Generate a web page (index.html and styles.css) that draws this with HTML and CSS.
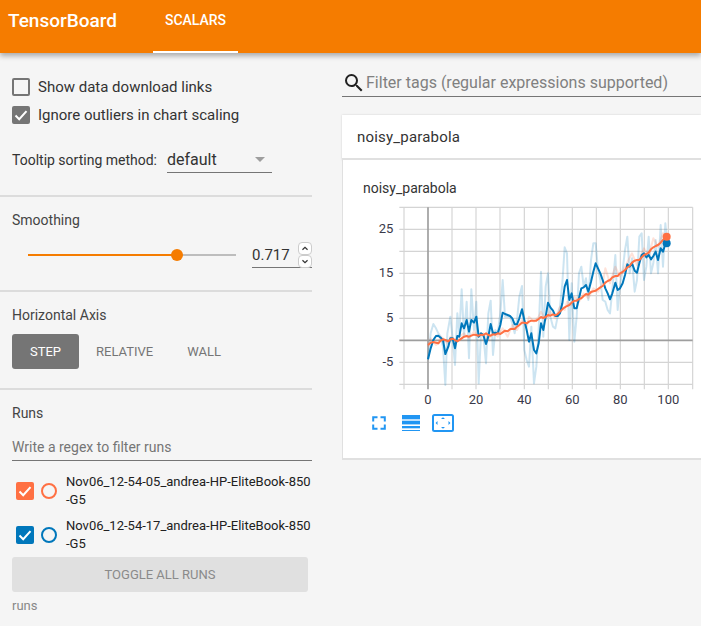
FILE: index.html
```html
<!DOCTYPE html>
<html lang="en">
<head>
    <meta charset="UTF-8">
    <meta name="viewport" content="width=device-width, initial-scale=1.0">
    <title>TensorBoard</title>
    <link rel="stylesheet" href="styles.css">
</head>
<body>
    <header class="topbar">
        <div class="brand">TensorBoard</div>
        <div class="tab">SCALARS</div>
    </header>
    <div class="content">
        <aside class="sidebar">
            <section class="options">
                <label class="check-row">
                    <span class="checkbox"></span>
                    <span>Show data download links</span>
                </label>
                <label class="check-row">
                    <span class="checkbox checked">
                        <svg viewBox="0 0 18 18"><path class="tick" d="M3.5 9.5l3.7 3.7 7.3-8"/></svg>
                    </span>
                    <span>Ignore outliers in chart scaling</span>
                </label>
                <div class="sort-row">
                    <span class="sort-label">Tooltip sorting method:</span>
                    <div class="dropdown">
                        <span>default</span>
                        <span class="caret"></span>
                    </div>
                </div>
            </section>
            <section class="smoothing">
                <div class="section-title">Smoothing</div>
                <div class="slider-row">
                    <div class="slider">
                        <div class="slider-fill"></div>
                        <div class="slider-thumb"></div>
                    </div>
                    <div class="number-input">
                        <span>0.717</span>
                        <div class="spinner">
                            <span class="spin-btn">
                                <svg viewBox="0 0 14 13"><path d="M4 8l3-3 3 3"/></svg>
                            </span>
                            <span class="spin-btn">
                                <svg viewBox="0 0 14 13"><path d="M4 5l3 3 3-3"/></svg>
                            </span>
                        </div>
                    </div>
                </div>
            </section>
            <section class="axis">
                <div class="section-title">Horizontal Axis</div>
                <div class="axis-buttons">
                    <span class="axis-btn active">STEP</span>
                    <span class="axis-btn">RELATIVE</span>
                    <span class="axis-btn">WALL</span>
                </div>
            </section>
            <section class="runs">
                <div class="section-title">Runs</div>
                <div class="regex-input">Write a regex to filter runs</div>
                <div class="run-row">
                    <span class="checkbox run-check orange">
                        <svg viewBox="0 0 18 18"><path class="tick" d="M3.5 9.5l3.7 3.7 7.3-8"/></svg>
                    </span>
                    <span class="radio orange-ring"></span>
                    <span class="run-name">Nov06_12-54-05_andrea-HP-EliteBook-850<br>-G5</span>
                </div>
                <div class="run-row">
                    <span class="checkbox run-check blue">
                        <svg viewBox="0 0 18 18"><path class="tick" d="M3.5 9.5l3.7 3.7 7.3-8"/></svg>
                    </span>
                    <span class="radio blue-ring"></span>
                    <span class="run-name">Nov06_12-54-17_andrea-HP-EliteBook-850<br>-G5</span>
                </div>
                <div class="toggle-btn">TOGGLE ALL RUNS</div>
                <div class="runs-foot">runs</div>
            </section>
        </aside>
        <main class="main">
            <div class="tag-filter">
                <svg class="search-icon" viewBox="0 0 24 24"><path d="M15.5 14h-.79l-.28-.27A6.47 6.47 0 0 0 16 9.5 6.5 6.5 0 1 0 9.5 16c1.61 0 3.09-.59 4.23-1.57l.27.28v.79l5 4.99L20.49 19l-4.99-5zm-6 0C7.01 14 5 11.99 5 9.5S7.01 5 9.5 5 14 7.01 14 9.5 11.99 14 9.5 14z"/></svg>
                <span>Filter tags (regular expressions supported)</span>
            </div>
            <div class="category">noisy_parabola</div>
            <div class="card">
                <div class="card-title">noisy_parabola</div>
                <svg class="chart" viewBox="90 99 975 618">
                    <g class="grid">
                        <path d="M178 112H1058M178 178H1058M178 244H1058M178 310H1058M178 377H1058M178 445H1058M178 577H1058M178 643H1058"/>
                        <path d="M192 112V658M336 112V658M408 112V658M480 112V658M553 112V658M625 112V658M697 112V658M769 112V658M841 112V658M913 112V658M985 112V658M1058 112V658"/>
                    </g>
                    <path class="axis-line" d="M178 511H1058M264 112V658"/>
                    <polyline class="raw raw-blue" points="264,568 272,490 280,462 288,475 295,490 302,500 309,530 316,645 322,490 331,440 338,505 345,585 352,430 358,490 365,358 372,500 380,395 387,565 394,358 402,480 409,395 416,640 423,490 430,495 438,580 445,430 452,392 459,555 466,480 473,490 481,430 488,330 495,440 503,440 510,440 517,460 524,490 531,450 538,380 546,348 553,540 560,570 567,590 574,470 582,640 589,590 596,480 603,305 610,500 617,350 624,310 631,440 639,470 646,475 653,440 660,410 667,340 674,232 681,250 688,510 695,340 703,515 710,440 717,310 724,290 731,350 738,325 745,390 753,270 760,220 767,220 774,300 781,330 788,390 796,395 803,420 810,430 817,360 826,255 833,420 840,345 848,300 855,240 862,200 869,310 876,265 884,365 891,330 898,200 905,190 912,330 919,290 926,200 933,310 940,280 947,210 954,310 962,165 969,290 976,160 980,200"/>
                    <polyline class="raw raw-orange" points="264,530 272,505 280,515 288,525 295,520 302,500 309,505 316,515 325,520 331,500 338,505 345,520 352,515 358,500 372,490 387,505 402,485 416,500 430,490 445,510 459,485 473,500 488,475 503,500 517,465 531,480 546,450 560,470 567,440 582,455 596,440 603,425 617,450 631,425 646,445 660,410 674,420 681,395 695,405 703,380 717,395 731,370 745,385 760,355 774,365 788,340 796,295 810,340 826,290 840,320 855,290 876,250 891,285 912,235 926,260 940,205 954,230 969,190 980,200"/>
                    <polyline class="line line-blue" points="264,568 272,535 280,510 288,498 295,497 302,503 309,510 316,552 325,530 331,505 338,505 345,535 352,498 358,500 365,460 372,475 380,450 387,485 394,450 402,458 409,440 416,500 423,490 430,495 438,522 445,500 452,462 459,490 466,488 473,490 481,465 488,428 495,432 503,435 510,438 517,445 524,463 531,463 538,445 546,418 553,450 560,480 567,515 574,490 582,540 589,550 596,520 603,460 610,480 617,440 624,398 631,412 639,422 646,438 653,438 660,430 667,400 674,350 681,330 688,390 695,370 703,415 710,415 717,385 724,355 731,352 738,345 745,365 753,335 760,305 767,280 774,295 781,310 788,330 796,355 803,370 810,388 817,370 826,338 833,360 840,355 848,340 855,315 862,283 869,290 876,280 884,302 891,308 898,280 905,255 912,250 919,262 926,255 933,268 940,258 947,245 954,270 962,235 969,245 976,222 980,220"/>
                    <polyline class="line line-orange" points="264,525 272,518 280,516 288,518 295,520 302,512 309,508 316,510 325,514 331,508 338,506 345,510 352,514 358,510 365,505 372,500 380,498 387,500 394,497 402,494 409,495 416,497 423,494 430,495 438,490 445,495 452,497 459,493 466,494 473,490 481,492 488,487 495,482 503,484 510,478 517,476 524,477 531,470 538,465 546,458 553,458 560,460 567,455 574,452 582,452 589,452 596,447 603,441 610,444 617,441 624,435 631,437 639,433 646,436 653,432 660,425 667,418 674,412 681,408 688,405 695,398 703,392 710,392 717,387 724,385 731,378 738,372 745,374 753,366 760,364 767,362 774,357 781,352 788,348 796,338 803,333 810,330 817,322 826,318 833,318 840,310 848,306 855,300 862,292 869,288 876,278 884,272 891,270 898,270 905,262 912,255 919,252 926,248 933,238 940,232 947,228 954,225 962,218 969,210 980,200"/>
                    <circle class="dot-blue" cx="980" cy="220" r="12"/>
                    <circle class="dot-orange" cx="980" cy="200" r="12"/>
                    <g class="y-labels">
                        <text x="160" y="188">25</text>
                        <text x="160" y="320">15</text>
                        <text x="160" y="455">5</text>
                        <text x="160" y="587">-5</text>
                    </g>
                    <g class="x-labels">
                        <text x="264" y="703">0</text>
                        <text x="408" y="703">20</text>
                        <text x="553" y="703">40</text>
                        <text x="697" y="703">60</text>
                        <text x="841" y="703">80</text>
                        <text x="985" y="703">100</text>
                    </g>
                </svg>
                <div class="chart-tools">
                    <svg class="tool tool-full" viewBox="0 0 14 14"><path d="M1.2 5.5V1.2h4.3M8.5 1.2h4.3v4.3M12.8 8.5v4.3H8.5M5.5 12.8H1.2V8.5"/></svg>
                    <svg class="tool tool-list" viewBox="0 0 18 16">
                        <rect x="0" y="0" width="18" height="4.3"/>
                        <rect x="0" y="5.7" width="18" height="3.7"/>
                        <rect x="0" y="11" width="18" height="2.3"/>
                        <rect x="0" y="15" width="18" height="1"/>
                    </svg>
                    <svg class="tool tool-fit" viewBox="0 0 22 18">
                        <rect class="fit-frame" x="1" y="1" width="20" height="16" rx="1.5"/>
                        <path class="fit-arrow" d="M11 3.2l-2 1.9h4zM11 14.8l-2-1.9h4zM3.6 9l1.9-2v4zM18.4 9l-1.9-2v4z"/>
                    </svg>
                </div>
            </div>
        </main>
    </div>
</body>
</html>
```

FILE: styles.css
```css
* {
    box-sizing: border-box;
}
html, body {
    height: 100%;
}
body {
    margin: 0;
    overflow: hidden;
    font-family: Roboto, "Liberation Sans", sans-serif;
    background-color: #f5f5f5;
    color: #212121;
}
.topbar {
    display: flex;
    height: 53px;
    background-color: #f57c00;
    color: white;
    box-shadow: 0 3px 5px rgba(0, 0, 0, 0.3);
    position: relative;
    z-index: 1;
}
.brand {
    width: 153px;
    padding-left: 8px;
    font-size: 19px;
    font-weight: 500;
    line-height: 42px;
}
.tab {
    width: 85px;
    height: 53px;
    border-bottom: 2px solid white;
    font-size: 14px;
    font-weight: 500;
    line-height: 41px;
    text-align: center;
}
.content {
    display: flex;
    height: 573px;
}
.sidebar {
    width: 312px;
    flex-shrink: 0;
}
.sidebar section {
    border-bottom: 2px solid #dcdcdc;
}
.sidebar section:last-child {
    border-bottom: none;
}
.options {
    height: 144px;
    padding: 25px 0 0 12px;
}
.check-row {
    display: flex;
    align-items: center;
    gap: 8px;
    height: 18px;
    margin-bottom: 10px;
    font-size: 15px;
    color: #333;
}
.checkbox {
    display: block;
    width: 18px;
    height: 18px;
    flex-shrink: 0;
    border: 2px solid #757575;
    border-radius: 2px;
}
.checkbox svg {
    display: block;
    width: 18px;
    height: 18px;
    margin: -2px;
}
.tick {
    fill: none;
    stroke: white;
    stroke-width: 2;
}
.checked {
    background-color: #757575;
}
.sort-row {
    display: flex;
    align-items: flex-end;
    margin-top: 22px;
}
.sort-label {
    width: 155px;
    font-size: 14px;
    line-height: 26px;
    color: #333;
}
.dropdown {
    display: flex;
    align-items: center;
    justify-content: space-between;
    width: 105px;
    height: 27px;
    padding-right: 7px;
    border-bottom: 1px solid #757575;
    font-size: 16px;
    color: #333;
}
.caret {
    width: 0;
    height: 0;
    border-left: 5px solid transparent;
    border-right: 5px solid transparent;
    border-top: 5px solid #9e9e9e;
}
.section-title {
    font-size: 14px;
    line-height: 16px;
    color: #444;
}
.smoothing {
    height: 95px;
    padding: 15px 0 0 12px;
}
.slider-row {
    display: flex;
    align-items: flex-end;
    margin-top: 15px;
}
.slider {
    position: relative;
    width: 208px;
    height: 2px;
    margin: 0 16px 12px 16px;
    background-color: #bdbdbd;
}
.slider-fill {
    width: 149px;
    height: 2px;
    background-color: #f57c00;
}
.slider-thumb {
    position: absolute;
    left: 143px;
    top: -5px;
    width: 12px;
    height: 12px;
    border-radius: 50%;
    background-color: #f57c00;
}
.number-input {
    display: flex;
    align-items: center;
    justify-content: space-between;
    width: 60px;
    height: 25px;
    border-bottom: 1px solid #757575;
    font-size: 15px;
    color: #333;
}
.spinner {
    display: flex;
    flex-direction: column;
    margin-top: -1px;
}
.spin-btn {
    display: block;
    width: 14px;
    height: 13px;
    border: 1px solid #ccc;
    border-radius: 4px;
    background-color: white;
}
.spin-btn svg {
    display: block;
    width: 12px;
    height: 11px;
}
.spin-btn path {
    fill: none;
    stroke: #333;
    stroke-width: 1.4;
}
.axis {
    height: 98px;
    padding: 15px 0 0 12px;
}
.axis-buttons {
    display: flex;
    margin-top: 11px;
}
.axis-btn {
    display: block;
    padding: 0 17px;
    font-size: 13px;
    line-height: 35px;
    color: #757575;
}
.axis-btn.active {
    padding: 0;
    width: 67px;
    border-radius: 3px;
    background-color: #757575;
    color: white;
    text-align: center;
}
.runs {
    padding: 15px 0 0 12px;
}
.regex-input {
    height: 30px;
    margin-top: 10px;
    border-bottom: 1px solid #757575;
    font-size: 14px;
    line-height: 32px;
    color: #757575;
}
.run-row {
    display: flex;
    align-items: flex-start;
    height: 44px;
    padding-left: 4px;
}
.regex-input + .run-row {
    margin-top: 12px;
}
.run-check {
    margin-top: 9px;
    border: none;
}
.run-check svg {
    margin: 0;
}
.orange {
    background-color: #ff7043;
}
.blue {
    background-color: #0077bb;
}
.radio {
    width: 16px;
    height: 16px;
    margin: 10px 9px 0 7px;
    flex-shrink: 0;
    border: 2px solid;
    border-radius: 50%;
}
.orange-ring {
    border-color: #ff7043;
}
.blue-ring {
    border-color: #0077bb;
}
.run-name {
    font-size: 13px;
    line-height: 18px;
    white-space: nowrap;
}
.toggle-btn {
    width: 296px;
    height: 35px;
    margin-top: -4px;
    border-radius: 3px;
    background-color: #e0e0e0;
    color: #8a8a8a;
    font-size: 13px;
    line-height: 35px;
    text-align: center;
}
.runs-foot {
    margin-top: 6px;
    font-size: 13px;
    line-height: 16px;
    color: #888;
}
.main {
    flex: 1;
    min-width: 0;
    margin-left: 30px;
}
.tag-filter {
    display: flex;
    align-items: center;
    height: 44px;
    padding: 16px 0 0 0;
    border-bottom: 1px solid #757575;
    font-size: 16px;
    color: #808080;
    white-space: nowrap;
}
.search-icon {
    width: 24px;
    height: 24px;
    fill: #212121;
    flex-shrink: 0;
}
.category {
    height: 45px;
    margin-top: 18px;
    padding-left: 15px;
    border-bottom: 2px solid #e0e0e0;
    background-color: white;
    box-shadow: 0 0 2px rgba(0, 0, 0, 0.15);
    font-size: 15px;
    letter-spacing: 0.2px;
    line-height: 44px;
    color: #333;
}
.card {
    height: 300px;
    padding: 0;
    border-left: 1px solid #e0e0e0;
    border-bottom: 2px solid #e0e0e0;
    background-color: white;
}
.card-title {
    padding: 20px 0 0 20px;
    font-size: 14px;
    line-height: 17px;
    color: #333;
}
.chart {
    display: block;
    width: 325px;
    height: 206px;
    margin: 6px 0 0 27px;
}
.grid path {
    fill: none;
    stroke: #d4d4d4;
    stroke-width: 3.5;
}
.axis-line {
    fill: none;
    stroke: #9e9e9e;
    stroke-width: 5;
}
.raw {
    fill: none;
    stroke-width: 6;
    stroke-linejoin: round;
}
.raw-blue {
    stroke: #0077bb;
    opacity: 0.2;
}
.raw-orange {
    stroke: #ff7043;
    opacity: 0.2;
}
.line {
    fill: none;
    stroke-width: 6;
    stroke-linejoin: round;
}
.line-blue {
    stroke: #0077bb;
}
.line-orange {
    stroke: #ff7043;
}
.dot-blue {
    fill: #0077bb;
}
.dot-orange {
    fill: #ff7043;
}
.chart text {
    font-size: 39px;
    fill: #3a3a4a;
}
.y-labels text {
    text-anchor: end;
}
.x-labels text {
    text-anchor: middle;
}
.chart-tools {
    display: flex;
    align-items: center;
    gap: 12px;
    margin: 5px 0 0 29px;
}
.tool {
    display: block;
}
.tool-full {
    width: 14px;
    height: 14px;
    fill: none;
    stroke: #2196f3;
    stroke-width: 2;
}
.tool-list {
    width: 18px;
    height: 16px;
    margin-left: 4px;
    fill: #2196f3;
}
.tool-fit {
    width: 22px;
    height: 18px;
}
.fit-frame {
    fill: none;
    stroke: #2196f3;
    stroke-width: 2;
}
.fit-arrow {
    fill: #2196f3;
}
```
